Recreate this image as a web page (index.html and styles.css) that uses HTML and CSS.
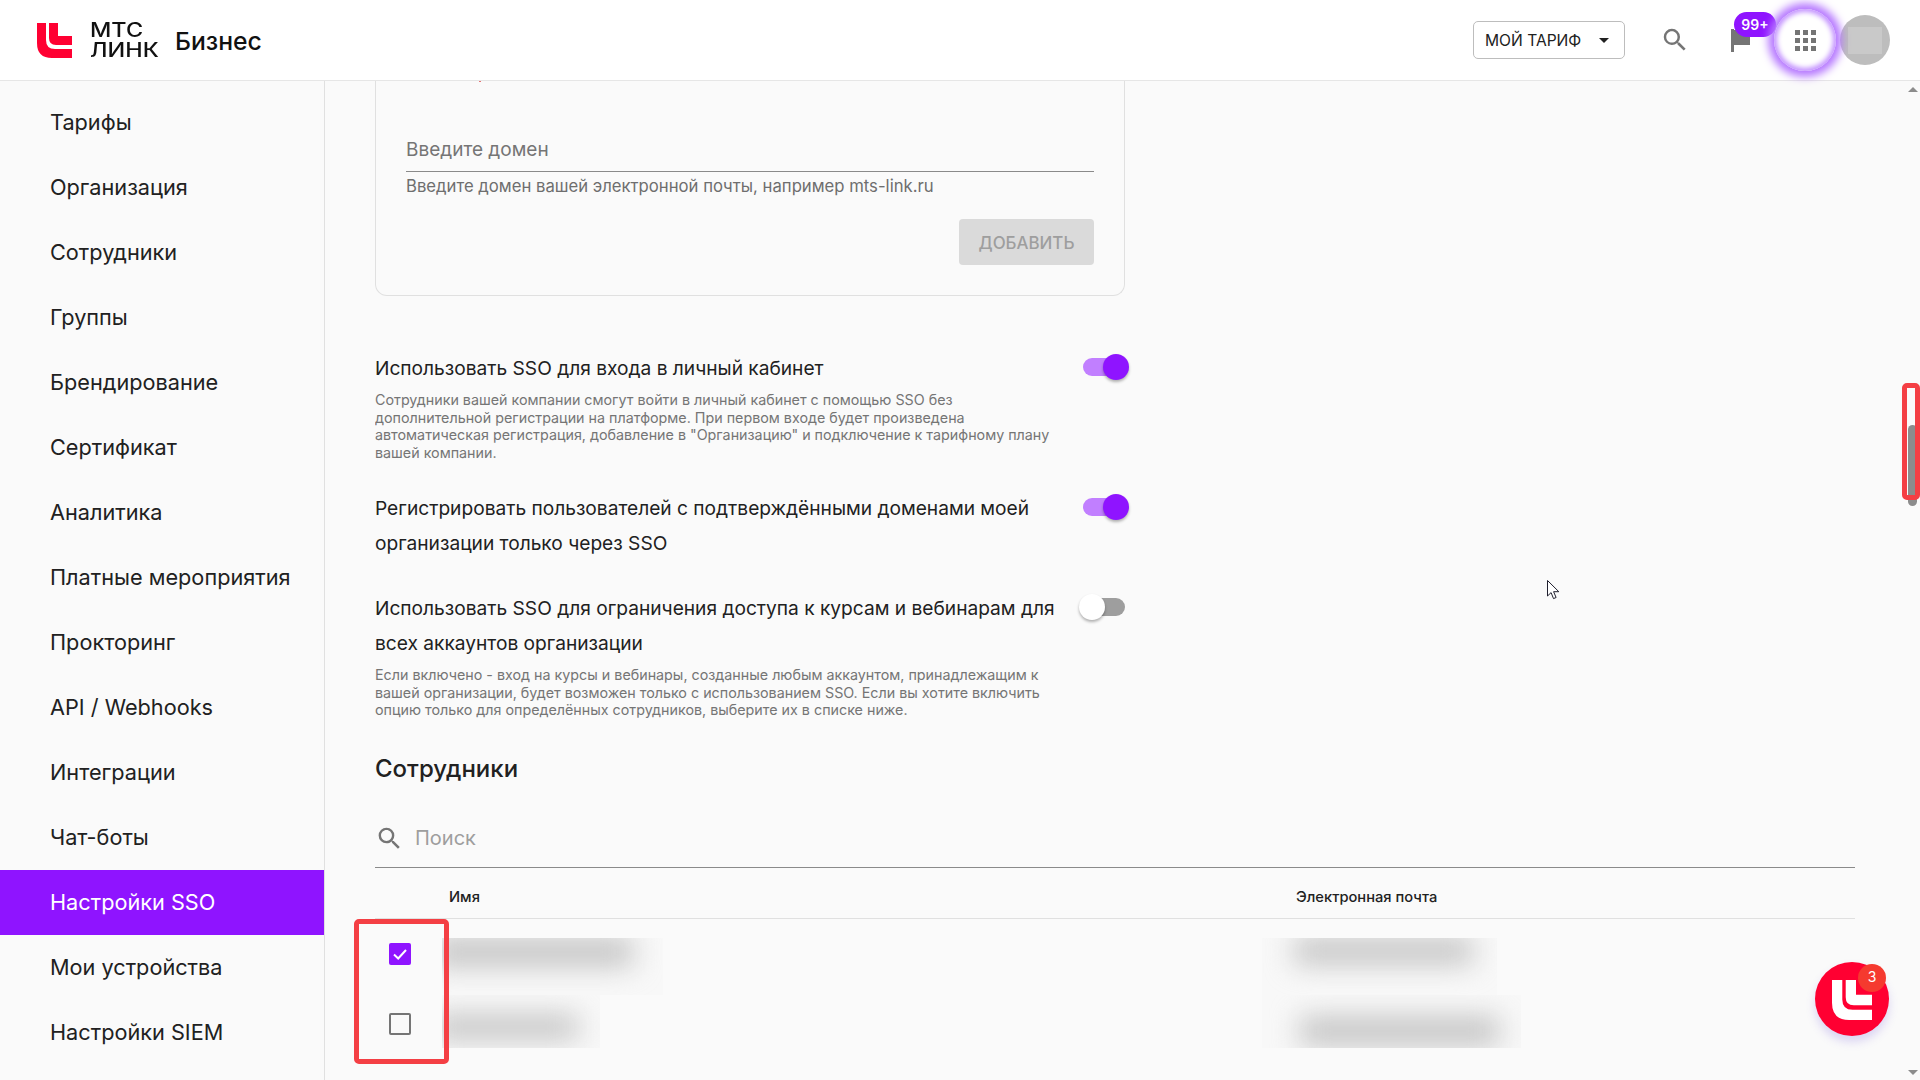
FILE: index.html
```html
<!DOCTYPE html>
<html lang="ru">
<head>
<meta charset="utf-8">
<title>Настройки SSO</title>
<link rel="stylesheet" href="styles.css">
</head>
<body>
<header class="topbar">
  <div class="brand">
    <svg class="brand-mark" viewBox="0 0 35 35"><path d="M0 0H9V17Q9 26 18 26H35V35H15Q0 35 0 20Z"/><path d="M12 0H21V13H35V22H19Q12 22 12 15Z"/></svg>
    <div class="brand-name"><span>МТС</span><span>ЛИНК</span></div>
    <div class="brand-biz">Бизнес</div>
  </div>
  <div class="top-actions">
    <button class="plan">МОЙ ТАРИФ<i class="caret"></i></button>
    <svg class="top-search" viewBox="0 0 24 24"><path d="M15.5 14h-.79l-.28-.27A6.471 6.471 0 0 0 16 9.5 6.5 6.5 0 1 0 9.5 16c1.61 0 3.09-.59 4.23-1.57l.27.28v.79l5 4.99L20.49 19l-4.99-5zm-6 0C7.01 14 5 11.99 5 9.5S7.01 5 9.5 5 14 7.01 14 9.5 11.99 14 9.5 14z"/></svg>
    <div class="flag-wrap">
      <svg class="flag" viewBox="0 0 19 23"><path d="M0 0H3V1H19V16H3V23H0Z"/></svg>
      <span class="count">99+</span>
    </div>
    <div class="apps">
      <div class="apps-grid"><i></i><i></i><i></i><i></i><i></i><i></i><i></i><i></i><i></i></div>
    </div>
    <div class="avatar"><div class="avatar-blank"></div></div>
  </div>
</header>
<div class="body-row">
  <nav class="sidebar">
    <a class="nav-item">Тарифы</a>
    <a class="nav-item">Организация</a>
    <a class="nav-item">Сотрудники</a>
    <a class="nav-item">Группы</a>
    <a class="nav-item">Брендирование</a>
    <a class="nav-item">Сертификат</a>
    <a class="nav-item">Аналитика</a>
    <a class="nav-item">Платные мероприятия</a>
    <a class="nav-item">Прокторинг</a>
    <a class="nav-item">API / Webhooks</a>
    <a class="nav-item">Интеграции</a>
    <a class="nav-item">Чат-боты</a>
    <a class="nav-item active">Настройки SSO</a>
    <a class="nav-item">Мои устройства</a>
    <a class="nav-item">Настройки SIEM</a>
  </nav>
  <main class="content">
    <section class="card">
      <i class="speck"></i>
      <div class="field"><span>Введите домен</span></div>
      <p class="helper">Введите домен вашей электронной почты, например mts-link.ru</p>
      <div class="card-foot"><button class="add">ДОБАВИТЬ</button></div>
    </section>

    <div class="opt first">
      <div>
        <div class="opt-title">Использовать SSO для входа в личный кабинет</div>
        <p class="opt-desc">Сотрудники вашей компании смогут войти в личный кабинет с помощью SSO без дополнительной регистрации на платформе. При первом входе будет произведена автоматическая регистрация, добавление в "Организацию" и подключение к тарифному плану вашей компании.</p>
      </div>
      <div class="toggle on"><i class="track"></i><i class="thumb"></i></div>
    </div>
    <div class="opt">
      <div>
        <div class="opt-title">Регистрировать пользователей с подтверждёнными доменами моей организации только через SSO</div>
      </div>
      <div class="toggle on"><i class="track"></i><i class="thumb"></i></div>
    </div>
    <div class="opt">
      <div>
        <div class="opt-title">Использовать SSO для ограничения доступа к курсам и вебинарам для всех аккаунтов организации</div>
        <p class="opt-desc">Если включено - вход на курсы и вебинары, созданные любым аккаунтом, принадлежащим к вашей организации, будет возможен только с использованием SSO. Если вы хотите включить опцию только для определённых сотрудников, выберите их в списке ниже.</p>
      </div>
      <div class="toggle"><i class="track"></i><i class="thumb"></i></div>
    </div>

    <h2 class="section-title">Сотрудники</h2>
    <div class="search">
      <svg viewBox="0 0 24 24"><path d="M15.5 14h-.79l-.28-.27A6.471 6.471 0 0 0 16 9.5 6.5 6.5 0 1 0 9.5 16c1.61 0 3.09-.59 4.23-1.57l.27.28v.79l5 4.99L20.49 19l-4.99-5zm-6 0C7.01 14 5 11.99 5 9.5S7.01 5 9.5 5 14 7.01 14 9.5 11.99 14 9.5 14z"/></svg>
      <span>Поиск</span>
    </div>
    <div class="table-head"><span>Имя</span><span>Электронная почта</span></div>
    <div class="table-body">
      <div class="row row-a">
        <div class="check-cell"><span class="check on"><svg viewBox="0 0 22 22"><path d="M5 11.5l4.2 4L17 7"/></svg></span></div>
        <div class="smudge name-a"><i></i></div>
        <div class="smudge mail-a"><i></i></div>
      </div>
      <div class="row row-b">
        <div class="check-cell"><span class="check"></span></div>
        <div class="smudge name-b"><i></i></div>
        <div class="smudge mail-b"><i></i></div>
      </div>
    </div>
  </main>
  <div class="scrollbar">
    <i class="arrow up"></i>
    <i class="scroll-thumb"></i>
    <i class="arrow down"></i>
  </div>
</div>

<div class="mark mark-scroll"></div>
<div class="mark mark-checks"></div>
<svg class="cursor" viewBox="0 0 13 20"><path d="M.5.5V16l3.6-3.4 2.4 6 2.6-1.1-2.5-5.8h5.2Z"/></svg>
<div class="chat">
  <svg viewBox="0 0 35 35"><path d="M0 0H9V17Q9 26 18 26H35V35H15Q0 35 0 20Z"/><path d="M12 0H21V13H35V22H19Q12 22 12 15Z"/></svg>
  <span class="chat-count">3</span>
</div>
</body>
</html>
```
FILE: styles.css
```css
* { box-sizing: border-box; }
html, body { margin: 0; height: 100%; }
body {
  width: 1920px;
  height: 1080px;
  overflow: hidden;
  display: flex;
  flex-direction: column;
  font-family: Inter, "Noto Sans", sans-serif;
  color: #212121;
  background: #fafafa;
  position: relative;
}
p { margin: 0; }
button { font-family: inherit; }

.topbar {
  height: 81px;
  flex: none;
  background: #fff;
  border-bottom: 1px solid #e6e6e6;
  display: flex;
  align-items: center;
  justify-content: space-between;
  padding: 0 30px 0 37px;
  position: relative;
  z-index: 2;
}
.brand { display: flex; align-items: center; }
.brand-mark { width: 35px; height: 35px; fill: #ff0032; display: block; }
.brand-name {
  margin-left: 18px;
  display: flex;
  flex-direction: column;
  gap: 1px;
  font-size: 19.5px;
  line-height: 19px;
  font-weight: 500;
  color: #111;
  width: 85px;
  transform: scaleX(1.2);
  transform-origin: left center;
}
.brand-biz { font-size: 24.7px; font-weight: 500; color: #111; margin-top: 1px; }
.top-actions { display: flex; align-items: center; }
.plan {
  width: 152px;
  height: 38px;
  background: #fff;
  border: 1px solid #bdbdbd;
  border-radius: 5px;
  padding: 0 0 0 11px;
  display: flex;
  align-items: center;
  font-size: 15.6px;
  color: #212121;
}
.caret {
  margin-left: 18px;
  border-left: 5px solid transparent;
  border-right: 5px solid transparent;
  border-top: 5px solid #212121;
}
.top-search { width: 30px; height: 30px; fill: #757575; margin-left: 35px; }
.flag-wrap { width: 43px; height: 60px; margin-left: 41px; position: relative; }
.flag { position: absolute; left: 0; top: 19px; width: 19px; height: 23px; fill: #757575; }
.count {
  position: absolute;
  left: 3px;
  top: 2px;
  width: 42px;
  height: 25px;
  border-radius: 13px;
  background: #8f14ff;
  color: #fff;
  font-size: 14px;
  font-weight: 600;
  line-height: 25px;
  text-align: center;
}
.apps {
  width: 62px;
  height: 62px;
  border-radius: 50%;
  display: flex;
  align-items: center;
  justify-content: center;
  box-shadow: 0 0 8px 6px #b678ff, inset 0 0 5px 3px #c595ff;
  position: relative;
  z-index: 1;
  background: #fff;
}
.apps-grid {
  display: grid;
  grid-template-columns: repeat(3, 5px);
  gap: 3px;
  margin-top: 1px;
}
.apps-grid i { width: 5px; height: 5px; background: #757575; }
.avatar {
  width: 50px;
  height: 50px;
  margin-left: 4px;
  border-radius: 50%;
  background: #bdbdbd;
  display: flex;
  align-items: center;
  justify-content: center;
}
.avatar-blank { width: 34px; height: 27px; background: #c9c9c9; }

.body-row { flex: 1; display: flex; min-height: 0; position: relative; }
.sidebar {
  width: 325px;
  flex: none;
  padding-top: 9px;
  background: #fafafa;
  border-right: 1px solid #e0e0e0;
  overflow: hidden;
}
.nav-item {
  display: flex;
  align-items: center;
  height: 65px;
  padding: 0 0 1.5px 50px;
  font-size: 21.7px;
  color: #212121;
}
.nav-item.active { background: #8f14ff; color: #fff; }

.content { width: 1480px; margin-left: 50px; flex: none; overflow: hidden; }
.card {
  width: 750px;
  height: 215px;
  border: 1px solid #e0e0e0;
  border-top: none;
  border-radius: 0 0 12px 12px;
  padding: 0 30px;
  position: relative;
}
.speck { position: absolute; left: 103px; top: 0; width: 2px; height: 1px; background: #e57373; }
.field {
  height: 91px;
  border-bottom: 1px solid #8a8a8a;
  display: flex;
  align-items: flex-end;
  padding-bottom: 9px;
  font-size: 19px;
  line-height: 24px;
  color: #757575;
}
.helper { margin-top: 4px; font-size: 16.7px; line-height: 20px; color: #6e6e6e; }
.card-foot { margin-top: 23px; display: flex; justify-content: flex-end; }
.add {
  width: 135px;
  height: 46px;
  border: none;
  border-radius: 4px;
  padding: 1px 0 0;
  background: #dadada;
  color: #9e9e9e;
  font-size: 16.9px;
  font-weight: 500;
}
.opt { display: grid; grid-template-columns: 680px 50px; column-gap: 24px; margin-top: 30px; }
.opt.first { margin-top: 55px; }
.opt-title { font-size: 19.15px; line-height: 35px; color: #212121; }
.opt-desc { margin-top: 5px; font-size: 14.3px; line-height: 17.5px; color: #757575; }
.toggle { position: relative; height: 26px; margin-top: 3px; }
.track { position: absolute; left: 4px; right: 4px; top: 4px; height: 18px; border-radius: 9px; background: #9e9e9e; }
.thumb { position: absolute; left: 0; top: 0; width: 26px; height: 26px; border-radius: 50%; background: #fff; box-shadow: 0 2px 3px rgba(0,0,0,.3); }
.toggle.on .track { left: 4px; right: 4px; background: #c17fff; }
.toggle.on .thumb { left: auto; right: 0; background: #8f14ff; }

.section-title { margin: 34.5px 0 0; font-size: 24px; line-height: 32px; font-weight: 500; color: #212121; }
.search {
  margin-top: 32px;
  height: 51px;
  display: flex;
  align-items: flex-start;
  padding: 6.5px 0 0 0;
  border-bottom: 1px solid #8a8a8a;
  font-size: 20px;
  line-height: 28px;
  color: #9e9e9e;
}
.search svg { width: 29px; height: 29px; fill: #757575; margin-right: 11px; }
.table-head {
  height: 51px;
  display: grid;
  grid-template-columns: 847px 1fr;
  padding: 15.5px 0 0 74px;
  border-bottom: 1px solid #e0e0e0;
  font-size: 14.7px;
  line-height: 26px;
  font-weight: 500;
  color: #212121;
}
.table-body { padding-top: 19px; }
.row { display: grid; grid-template-columns: 67px 820px 1fr; }
.row-a { height: 57px; }
.row-b { height: 53px; }
.check-cell { padding: 5px 0 0 14px; }
.row-b .check-cell { padding-top: 18px; }
.check {
  display: block;
  width: 22px;
  height: 22px;
  border: 2px solid #757575;
  border-radius: 2px;
}
.check.on { border: none; background: #8f14ff; }
.check svg { display: block; width: 22px; height: 22px; fill: none; stroke: #fff; stroke-width: 2; }
.smudge { overflow: hidden; position: relative; background: #f8f8f8; }
.smudge i { position: absolute; display: block; background: #c2c2c2; filter: blur(14px); }
.name-a { width: 221px; }
.name-a i { left: -10px; right: 30px; top: 0; height: 28px; }
.mail-a { width: 235px; grid-column: 3; }
.mail-a i { left: 32px; right: 24px; top: 0; height: 26px; }
.name-b { width: 158px; }
.name-b i { left: -10px; right: 22px; top: 20px; height: 24px; }
.mail-b { width: 259px; grid-column: 3; }
.mail-b i { left: 38px; right: 22px; top: 22px; height: 28px; }

.scrollbar {
  position: absolute;
  right: 0;
  top: 0;
  bottom: 0;
  width: 15px;
  background: #fafafa;
}
.scroll-thumb {
  position: absolute;
  left: 3px;
  top: 344px;
  width: 9px;
  height: 81px;
  border-radius: 5px;
  background: #8c8c8c;
}
.arrow {
  position: absolute;
  left: 3px;
  border-left: 5px solid transparent;
  border-right: 5px solid transparent;
}
.arrow.up { top: 6px; border-bottom: 5px solid #8c8c8c; }
.arrow.down { bottom: 5px; border-top: 5px solid #8c8c8c; }

.mark { position: absolute; border: 5px solid #f43f44; border-radius: 5px; z-index: 3; }
.mark-scroll { left: 1902px; top: 383px; width: 18px; height: 117px; }
.mark-checks { left: 354px; top: 919px; width: 95px; height: 145px; }
.cursor { position: absolute; left: 1547px; top: 580px; width: 13px; height: 20px; fill: #fff; stroke: #1f1f2e; stroke-width: 1; z-index: 3; }
.chat {
  position: absolute;
  left: 1815px;
  top: 962px;
  width: 74px;
  height: 74px;
  border-radius: 50%;
  background: #ff0032;
  box-shadow: 0 6px 10px rgba(110,80,220,.22);
  display: flex;
  align-items: center;
  justify-content: center;
  z-index: 3;
}
.chat svg { width: 40px; height: 40px; fill: #fff; margin: 1px 0 0 0; }
.chat-count {
  position: absolute;
  left: 43px;
  top: 2px;
  width: 28px;
  height: 28px;
  border-radius: 50%;
  background: #f53a2f;
  color: #fff;
  font-size: 14px;
  line-height: 26px;
  text-align: center;
}
```
